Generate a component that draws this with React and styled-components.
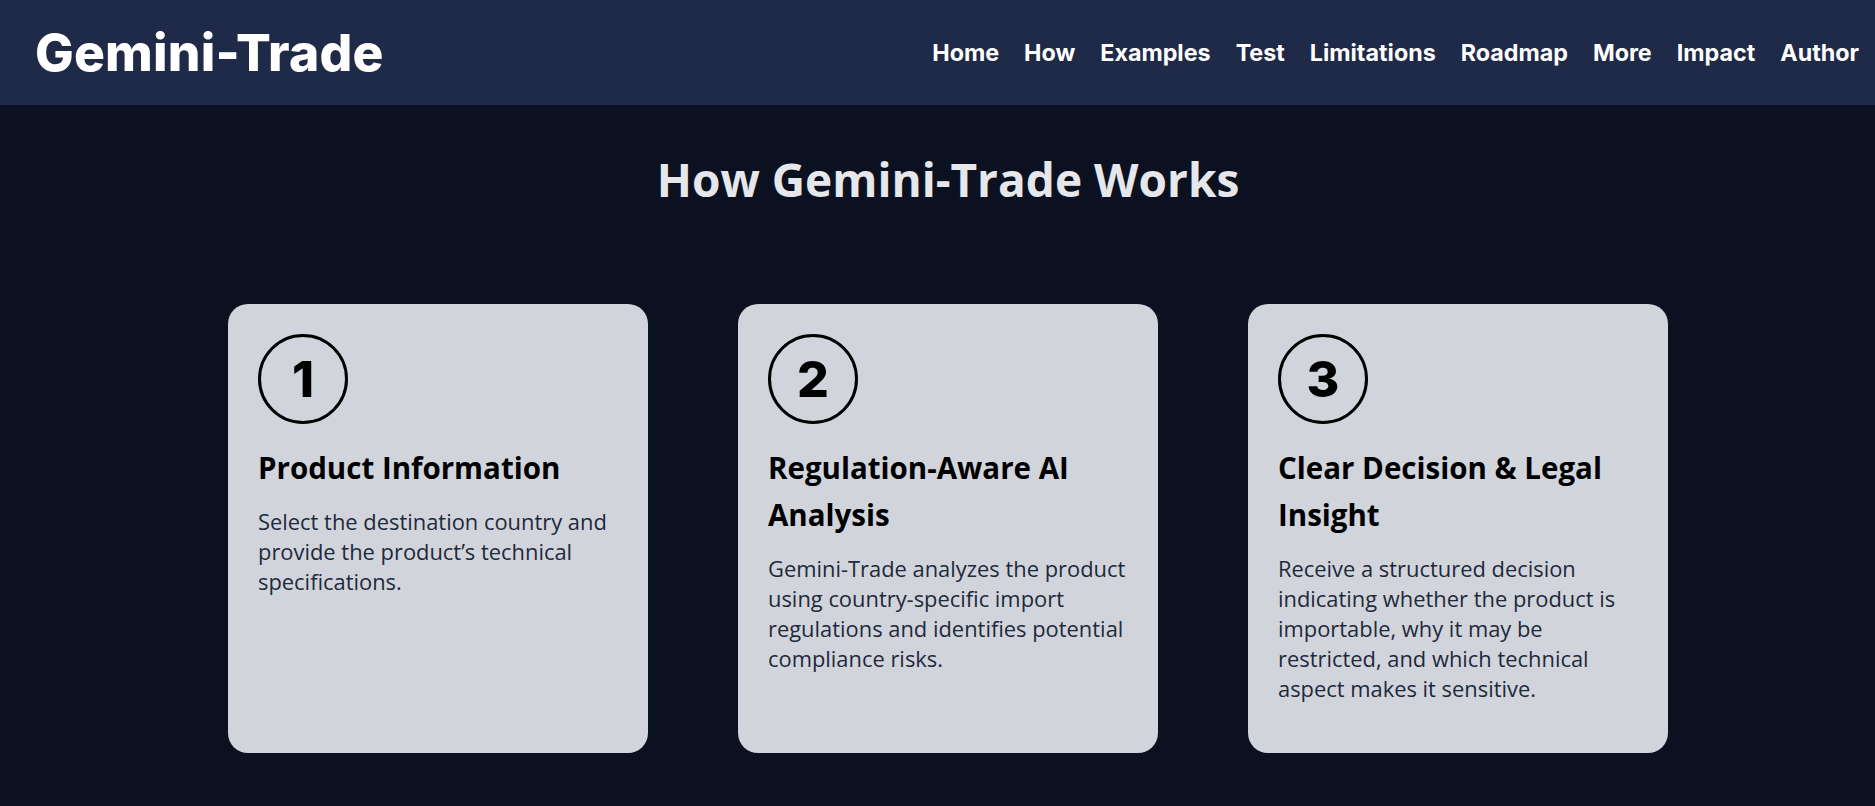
import styled, { createGlobalStyle } from 'styled-components';

const GlobalStyle = createGlobalStyle`
  * { box-sizing: border-box; }
  body {
    margin: 0;
    background: #0b1120;
    font-family: "Open Sans", "Noto Sans", sans-serif;
  }
`;

const steps = [
  {
    num: 1,
    title: 'Product Information',
    text: 'Select the destination country and provide the product\u2019s technical specifications.',
  },
  {
    num: 2,
    title: 'Regulation-Aware AI Analysis',
    text: 'Gemini-Trade analyzes the product using country-specific import regulations and identifies potential compliance risks.',
  },
  {
    num: 3,
    title: 'Clear Decision & Legal Insight',
    text: 'Receive a structured decision indicating whether the product is importable, why it may be restricted, and which technical aspect makes it sensitive.',
  },
];

const links = ['Home', 'How', 'Examples', 'Test', 'Limitations', 'Roadmap', 'More', 'Impact', 'Author'];

export default function App() {
  return (
    <>
      <GlobalStyle />
      <Header>
        <Logo>Gemini-Trade</Logo>
        <Nav>
          {links.map((l) => (
            <NavLink key={l} href={`#${l.toLowerCase()}`}>{l}</NavLink>
          ))}
        </Nav>
      </Header>
      <Main>
        <Title>How Gemini-Trade Works</Title>
        <Cards>
          {steps.map((s) => (
            <Card key={s.num}>
              <Badge>{s.num}</Badge>
              <CardTitle>{s.title}</CardTitle>
              <CardText>{s.text}</CardText>
            </Card>
          ))}
        </Cards>
      </Main>
    </>
  );
}

const Header = styled.header`
  height: 105px;
  background: #1f2a48;
  display: flex;
  align-items: center;
  justify-content: space-between;
  padding: 0 16px 0 35px;
`;

const Logo = styled.div`
  font-family: "Inter", sans-serif;
  font-weight: 800;
  font-size: 51.5px;
  letter-spacing: 0.2px;
  color: #ffffff;
  margin-top: -2px;
`;

const Nav = styled.nav`
  display: flex;
  align-items: center;
  gap: 25px;
`;

const NavLink = styled.a`
  font-family: "Inter", sans-serif;
  font-weight: 700;
  font-size: 23.3px;
  color: #ffffff;
  text-decoration: none;
`;

const Main = styled.main`
  padding: 44px 0 60px 21px;
  display: flex;
  flex-direction: column;
  align-items: center;
`;

const Title = styled.h2`
  margin: 0;
  font-family: "Open Sans", sans-serif;
  font-weight: 700;
  font-size: 46px;
  line-height: 60px;
  color: #e5e7eb;
`;

const Cards = styled.div`
  margin-top: 95px;
  display: grid;
  grid-template-columns: repeat(3, 420px);
  gap: 90px;
`;

const Card = styled.div`
  height: 449px;
  background: #d1d5db;
  border-radius: 20px;
  padding: 30px;
`;

const Badge = styled.div`
  width: 90px;
  height: 90px;
  border: 3px solid #000;
  border-radius: 50%;
  display: flex;
  align-items: center;
  justify-content: center;
  font-family: "Inter", sans-serif;
  font-weight: 800;
  font-size: 50px;
  color: #000;
`;

const CardTitle = styled.h3`
  margin: 20px 0 0;
  font-family: "Open Sans", sans-serif;
  font-weight: 700;
  font-size: 29.5px;
  line-height: 47px;
  color: #000;
`;

const CardText = styled.p`
  margin: 16px 0 0;
  font-size: 21.9px;
  line-height: 29.9px;
  color: #1e293b;
`;
